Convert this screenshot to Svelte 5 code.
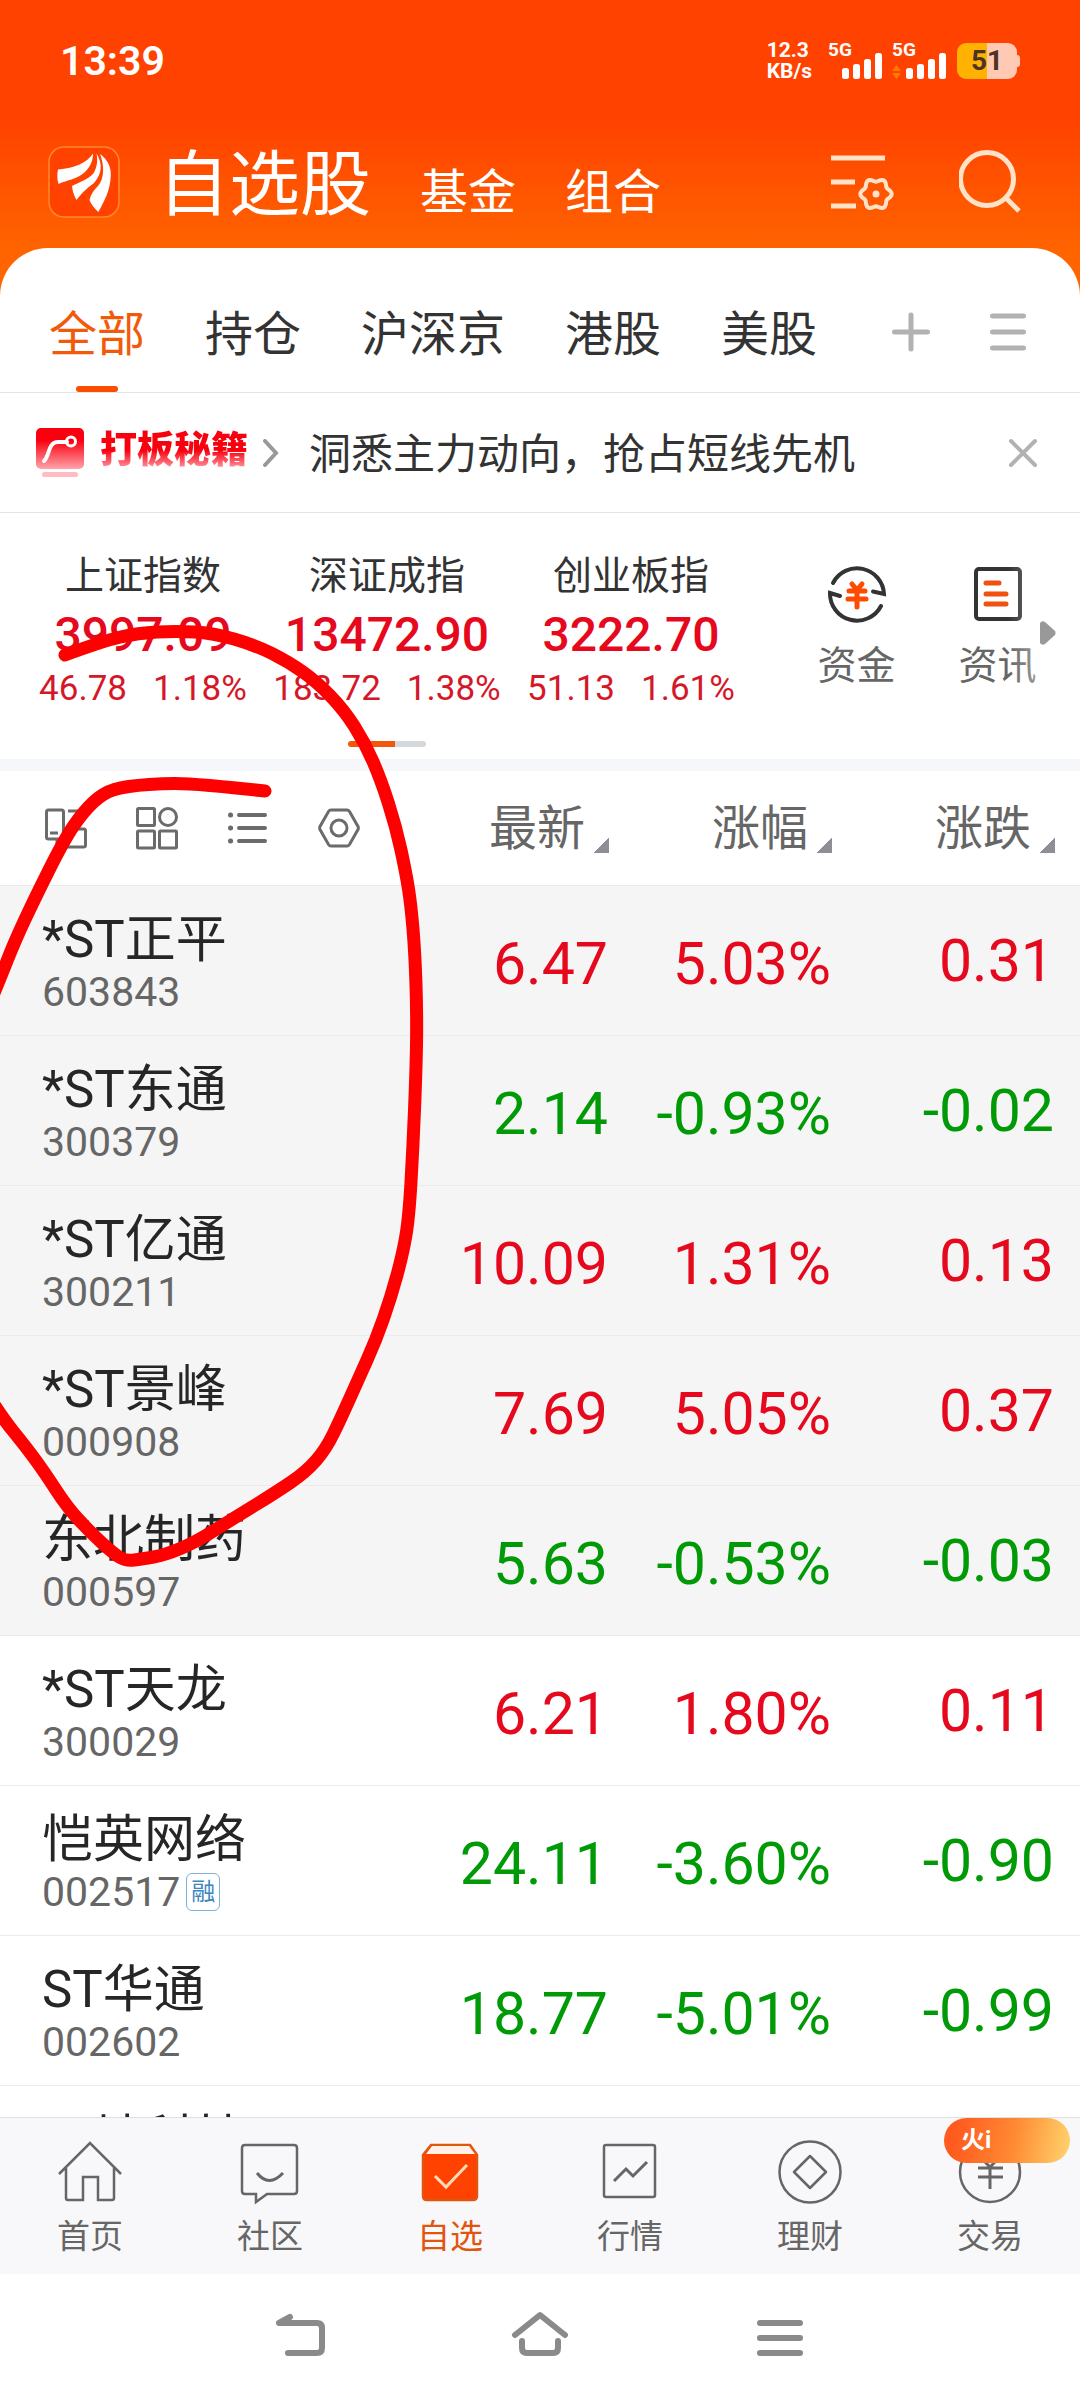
<script lang="ts">
    interface Stock {
        name: string;
        code: string;
        price: string;
        pct: string;
        diff: string;
        pinned?: boolean;
        margin?: boolean;
    }

    const groups = ['全部', '持仓', '沪深京', '港股', '美股'];
    let group = $state('全部');
    let noticeOpen = $state(true);

    const indices = [
        { name: '上证指数', value: '3997.09', diff: '46.78', pct: '1.18%' },
        { name: '深证成指', value: '13472.90', diff: '183.72', pct: '1.38%' },
        { name: '创业板指', value: '3222.70', diff: '51.13', pct: '1.61%' },
    ];

    const columns = ['最新', '涨幅', '涨跌'];

    const stocks: Stock[] = [
        { name: '*ST正平', code: '603843', price: '6.47', pct: '5.03%', diff: '0.31', pinned: true },
        { name: '*ST东通', code: '300379', price: '2.14', pct: '-0.93%', diff: '-0.02', pinned: true },
        { name: '*ST亿通', code: '300211', price: '10.09', pct: '1.31%', diff: '0.13', pinned: true },
        { name: '*ST景峰', code: '000908', price: '7.69', pct: '5.05%', diff: '0.37', pinned: true },
        { name: '东北制药', code: '000597', price: '5.63', pct: '-0.53%', diff: '-0.03', pinned: true },
        { name: '*ST天龙', code: '300029', price: '6.21', pct: '1.80%', diff: '0.11' },
        { name: '恺英网络', code: '002517', price: '24.11', pct: '-3.60%', diff: '-0.90', margin: true },
        { name: 'ST华通', code: '002602', price: '18.77', pct: '-5.01%', diff: '-0.99' },
        { name: '天地科技', code: '', price: '', pct: '', diff: '' },
    ];

    const tabs = [
        { id: 'home', label: '首页' },
        { id: 'social', label: '社区' },
        { id: 'watch', label: '自选' },
        { id: 'market', label: '行情' },
        { id: 'wealth', label: '理财' },
        { id: 'trade', label: '交易' },
    ];
    let tab = $state('watch');

    // hand-drawn marker line, leaves the screen on the left and comes back
    const pen: [number, number][] = [
        [65, 655], [103, 641], [138, 633], [176, 631], [213, 633], [255, 645], [289, 662],
        [317, 682], [344, 710], [365, 743], [381, 780], [396, 827], [406, 873], [411, 905],
        [415, 953], [417, 1017], [416, 1073], [413, 1147], [409, 1217], [403, 1253], [391, 1297],
        [376, 1340], [358, 1380], [341, 1418], [326, 1449], [306, 1472], [275, 1493], [234, 1518],
        [196, 1542], [165, 1555], [142, 1559], [126, 1561], [114, 1554], [90, 1532], [67, 1507],
        [45, 1473], [26, 1447], [0, 1415], [-40, 1350], [-60, 1200], [-30, 1050], [0, 979],
        [14, 943], [34, 900], [64, 840], [83, 812], [103, 793], [126, 786], [172, 783],
        [207, 785], [265, 791],
    ];

    function smooth(pts: [number, number][]): string {
        let d = `M${pts[0][0]} ${pts[0][1]}`;
        for (let i = 1; i < pts.length - 1; i++) {
            const [x, y] = pts[i];
            const [nx, ny] = pts[i + 1];
            d += `Q${x} ${y} ${(x + nx) / 2} ${(y + ny) / 2}`;
        }
        const last = pts[pts.length - 1];
        return d + `L${last[0]} ${last[1]}`;
    }

    // six-lobed outline
    function gear(cx: number, cy: number, r: number): string {
        const pts: string[] = [];
        for (let a = 0; a < 360; a += 6) {
            const t = (a * Math.PI) / 180;
            const rr = r + 1.7 * Math.cos(6 * t);
            pts.push(`${(cx + rr * Math.cos(t)).toFixed(1)} ${(cy + rr * Math.sin(t)).toFixed(1)}`);
        }
        return `M${pts.join('L')}Z`;
    }
</script>

{#snippet signal(arrows: boolean)}
    <div class="signal">
        <span>5G</span>
        <svg width="54" height="26" viewBox="0 0 54 26">
            {#if arrows}
                <path d="M0 18l4.5-6 4.5 6zM0 20h9l-4.5 6z" fill="#ff7a00" />
            {/if}
            <g fill="#fff">
                <rect x="14" y="15" width="7" height="11" rx="2.5" />
                <rect x="25" y="11" width="7" height="15" rx="2.5" />
                <rect x="36" y="6" width="7" height="20" rx="2.5" />
                <rect x="47" y="0" width="7" height="26" rx="2.5" />
            </g>
        </svg>
    </div>
{/snippet}

<div class="app">
    <header>
        <div class="status">
            <span class="time">13:39</span>
            <div class="speed"><span>12.3</span><span>KB/s</span></div>
            {@render signal(false)}
            {@render signal(true)}
            <div class="battery">51</div>
        </div>
        <div class="titlebar">
            <svg class="logo" width="72" height="72" viewBox="0 0 72 72">
                <rect x="1" y="1" width="70" height="70" rx="15" fill="#ff4200" stroke="#ff8a2a" stroke-width="1.5" />
                <g fill="#fff">
                    <path d="M10 23.5C27 22 39 17 45 7.5C45 14 43 20 37 26C30 33 19 34 10.5 38C9 33 9 28 10 23.5Z" />
                    <path d="M48.5 7.5C55 18 54 28 46 37C38 43 33 48 28.5 54C26 50 24.5 45 24 40C32 36 40 33 45 28C49 22 50 15 48.5 7.5Z" />
                    <path d="M52 8C60 14 63 21 62.8 29C62.5 44 56 56 50.3 66C46 62 43 58 41.5 54C43 48 46 44 50 40C57 32 56 18 52 8Z" />
                </g>
            </svg>
            <nav class="sections">
                <h1>自选股</h1>
                <a href="#fund">基金</a>
                <a href="#portfolio">组合</a>
            </nav>
            <button class="filter" aria-label="设置">
                <svg width="64" height="64" viewBox="0 0 64 64" fill="none" stroke="#ffe2c8" stroke-width="5">
                    <path d="M0 8h54M0 32h24M0 56h25" />
                    <path d={gear(45, 44, 14)} stroke-width="4" stroke-linejoin="round" />
                    <circle cx="45" cy="44" r="3.5" fill="#ffe2c8" stroke="none" />
                </svg>
            </button>
            <button aria-label="搜索">
                <svg width="64" height="64" viewBox="0 0 64 64" fill="none" stroke="#ffe2c8" stroke-width="5">
                    <circle cx="28" cy="29" r="26.5" />
                    <path d="M46 47l14 14" />
                </svg>
            </button>
        </div>
    </header>

    <main>
        <div class="groups">
            {#each groups as g}
                <button class="group" class:active={g === group} onclick={() => (group = g)}>{g}</button>
            {/each}
            <button class="add" aria-label="添加分组">
                <svg width="38" height="40" viewBox="0 0 38 40" stroke="#b2b2b2" stroke-width="5" stroke-linecap="round">
                    <path d="M2.5 20h33M19 3v34" />
                </svg>
            </button>
            <button aria-label="管理分组">
                <svg width="36" height="40" viewBox="0 0 36 40" stroke="#b2b2b2" stroke-width="5" stroke-linecap="round">
                    <path d="M2.5 4h31M2.5 20h31M2.5 36h31" />
                </svg>
            </button>
        </div>

        {#if noticeOpen}
            <div class="notice">
                <svg width="48" height="50" viewBox="0 0 48 50">
                    <defs>
                        <linearGradient id="tip" x1="0" y1="0" x2="0" y2="1">
                            <stop offset="0.3" stop-color="#f9000f" />
                            <stop offset="1" stop-color="#ffa3ab" />
                        </linearGradient>
                    </defs>
                    <rect width="48" height="41" rx="5" fill="url(#tip)" />
                    <rect x="6" y="44" width="36" height="5" rx="2.5" fill="#ffbcc2" />
                    <path d="M8 33C14 27 12 14 22 14H31" fill="none" stroke="#fff" stroke-width="4" stroke-linecap="round" />
                    <circle cx="35" cy="13.5" r="4.5" fill="none" stroke="#fff" stroke-width="3" />
                </svg>
                <strong>打板秘籍</strong>
                <svg width="16" height="28" viewBox="0 0 16 28" fill="none" stroke="#999" stroke-width="4" stroke-linecap="round">
                    <path d="M2 2l11 12L2 26" />
                </svg>
                <a href="#tips">洞悉主力动向，抢占短线先机</a>
                <button aria-label="关闭" onclick={() => (noticeOpen = false)}>
                    <svg width="30" height="30" viewBox="0 0 30 30" stroke="#b2b2b2" stroke-width="4" stroke-linecap="round">
                        <path d="M3 3l24 24M27 3L3 27" />
                    </svg>
                </button>
            </div>
        {/if}

        <section class="indices">
            <div class="cards">
                {#each indices as ix}
                    <div class="index">
                        <span class="index-name">{ix.name}</span>
                        <span class="index-value">{ix.value}</span>
                        <span class="index-change"><span>{ix.diff}</span><span>{ix.pct}</span></span>
                    </div>
                {/each}
            </div>
            <div class="links">
                <a href="#money">
                    <svg width="60" height="60" viewBox="0 0 60 60" fill="none" stroke="#333" stroke-width="4">
                        <path d="M6 19A27 27 0 0 1 57 30L46 27.5" stroke-linecap="round" />
                        <path d="M54 42A27 27 0 0 1 3 29L13 32" stroke-linecap="round" />
                        <g stroke="#ff4a00" stroke-width="5" stroke-linecap="round">
                            <path d="M25 20l5 6 5-6M22 27h16M21 35h18M30 26v17" />
                        </g>
                    </svg>
                    资金
                </a>
                <a href="#news">
                    <svg width="60" height="60" viewBox="0 0 60 60" fill="none" stroke="#333" stroke-width="4">
                        <rect x="8" y="5" width="44" height="50" rx="3" />
                        <path d="M18 19h13M18 30h20M18 40h20" stroke="#f05010" stroke-width="5" stroke-linecap="round" />
                    </svg>
                    资讯
                </a>
                <div class="more">
                    <svg width="16" height="24" viewBox="0 0 16 24" fill="#999">
                        <path d="M0 2Q2-1 5 1L15 10Q16 12 15 14L5 23Q2 25 0 22Z" />
                    </svg>
                </div>
            </div>
            <div class="pager"></div>
        </section>

        <div class="list">
            <table>
                <thead>
                    <tr>
                        <th>
                            <div class="tools">
                                <button aria-label="分栏">
                                    <svg width="42" height="44" viewBox="0 0 42 44">
                                        <rect x="1.5" y="4" width="17" height="29" rx="2" />
                                        <path d="M5 27h8M23 5h15v8M24 23h15q1.5 0 1.5 2v14q0 2-2 2H14q-2 0-2-2v-6" />
                                    </svg>
                                </button>
                                <button aria-label="宫格">
                                    <svg width="42" height="44" viewBox="0 0 42 44">
                                        <rect x="1.5" y="2.5" width="17" height="17" rx="1" />
                                        <circle cx="32" cy="11" r="8.5" />
                                        <rect x="1.5" y="25" width="17" height="17" rx="1" />
                                        <rect x="23.5" y="25" width="17" height="17" rx="1" />
                                    </svg>
                                </button>
                                <button aria-label="列表">
                                    <svg width="42" height="44" viewBox="0 0 42 44" stroke-linecap="round">
                                        <path d="M3.5 9h.1M3.5 22h.1M3.5 35h.1" stroke-width="5" />
                                        <path d="M12 9h26M12 22h26M12 35h26" stroke-width="4" />
                                    </svg>
                                </button>
                                <button aria-label="设置">
                                    <svg width="42" height="44" viewBox="0 0 42 44">
                                        <path d="M13 4h16q1.5 0 2.5 1.5l8.5 15q.7 1.5 0 3l-8.5 15q-1 1.5-2.5 1.5H13q-1.5 0-2.5-1.5L2 23.5q-.7-1.5 0-3l8.5-15Q11.5 4 13 4z" />
                                        <circle cx="21" cy="22" r="8" />
                                    </svg>
                                </button>
                            </div>
                        </th>
                        {#each columns as c}
                            <th class="col"><button class="sort">{c}</button></th>
                        {/each}
                    </tr>
                </thead>
                <tbody>
                    {#each stocks as s}
                        <tr class:pinned={s.pinned} class:down={s.pct.startsWith('-')}>
                            <td>
                                <div class="name">{s.name}</div>
                                <div class="code">
                                    {s.code}
                                    {#if s.margin}<span class="margin">融</span>{/if}
                                </div>
                            </td>
                            <td class="num">{s.price}</td>
                            <td class="num">{s.pct}</td>
                            <td class="num">{s.diff}</td>
                        </tr>
                    {/each}
                </tbody>
            </table>
        </div>
    </main>

    <nav class="tabbar">
        {#each tabs as t}
            <button class:active={t.id === tab} onclick={() => (tab = t.id)}>
                <svg width="66" height="66" viewBox="0 0 66 66" fill="none" stroke="currentColor" stroke-width="2.5">
                    {#if t.id === 'home'}
                        <path d="M2 35L33 4L64 35M9 29V59q0 2 2 2H26V38H41V61H55q2 0 2-2V29" />
                    {:else if t.id === 'social'}
                        <path d="M8 6H57q3 0 3 3V52q0 3-3 3H30L19 63V55H8q-3 0-3-3V9q0-3 3-3z" />
                        <path d="M20 34Q32 49 46 34" stroke-width="3" />
                    {:else if t.id === 'watch'}
                        <path d="M6 16L14 6H53L60 16V57q0 4-4 4H10q-4 0-4-4Z" fill="#ff4200" />
                        <path d="M9 15L15 7H52L58 15Z" fill="#fff1e6" stroke="none" />
                        <path d="M18 37L29 48L50 26" stroke="#ffdcb8" stroke-width="3" />
                    {:else if t.id === 'market'}
                        <rect x="7" y="6" width="51" height="52" rx="2" />
                        <path d="M17 42L29 30L36 37L50 23" stroke-width="3" />
                    {:else if t.id === 'wealth'}
                        <circle cx="33" cy="33" r="30.5" />
                        <path d="M33 17L49 33L33 49L17 33Z" stroke-linejoin="round" />
                    {:else}
                        <circle cx="33" cy="33" r="30" />
                        <path d="M23 18L33 28L43 18M21 29H46M21 38H46M33 28V50" stroke-width="3" />
                    {/if}
                </svg>
                {t.label}
                {#if t.id === 'trade'}<span class="badge">火i</span>{/if}
            </button>
        {/each}
    </nav>

    <nav class="system">
        <button aria-label="返回">
            <svg width="60" height="48" viewBox="0 0 60 48"><path d="M20 6L9 12H47q5 0 5 5V37q0 5-5 5H18" /></svg>
        </button>
        <button aria-label="主屏幕">
            <svg width="60" height="48" viewBox="0 0 60 48"><path d="M5 24L30 4L55 24M12 30V37q0 5 5 5H43q5 0 5-5V30" /></svg>
        </button>
        <button aria-label="最近任务">
            <svg width="60" height="48" viewBox="0 0 60 48"><path d="M10 12H50M10 27H50M10 42H50" /></svg>
        </button>
    </nav>

    <svg class="pen" viewBox="0 0 1080 2400" aria-hidden="true">
        <path d={smooth(pen)} />
    </svg>
</div>

<style>
    :global(body) {
        background: #fff;
    }
    .app {
        position: relative;
        display: flex;
        flex-direction: column;
        height: 100vh;
        overflow: hidden;
        font-family: Roboto, 'Noto Sans CJK SC', sans-serif;
        color: #333;
        background: #fff;
    }
    svg {
        display: block;
        flex: none;
    }
    button {
        padding: 0;
        border: 0;
        background: none;
        font: inherit;
        color: inherit;
        cursor: pointer;
    }
    a {
        color: inherit;
        text-decoration: none;
    }

    header {
        padding-bottom: 60px;
        margin-bottom: -60px;
        background: linear-gradient(#ff4200 120px, #ff6400 250px);
        color: #fff;
    }
    .status {
        display: flex;
        align-items: center;
        height: 122px;
        padding: 0 60px;
    }
    .time {
        flex: 1;
        font-size: 41px;
        font-weight: 600;
    }
    .speed {
        display: flex;
        flex-direction: column;
        margin-right: 16px;
        font-size: 21px;
        font-weight: 700;
        line-height: 21px;
    }
    .signal {
        display: flex;
        flex-direction: column;
        align-items: flex-end;
        margin-right: 10px;
    }
    .signal span {
        align-self: flex-start;
        height: 10px;
        font-size: 19px;
        font-weight: 700;
        line-height: 14px;
    }
    .battery {
        position: relative;
        width: 60px;
        margin: 0 3px 0 1px;
        border-radius: 9px;
        background: linear-gradient(90deg, #ffb300 50%, #ffc9b3 50%);
        color: #4d3226;
        font-size: 28px;
        font-weight: 700;
        line-height: 36px;
        text-align: center;
    }
    .battery::after {
        content: '';
        position: absolute;
        right: -3px;
        top: 12px;
        width: 3px;
        height: 12px;
        border-radius: 0 3px 3px 0;
        background: #ffc9b3;
    }
    .titlebar {
        display: flex;
        align-items: center;
        height: 126px;
        padding: 0 57px 6px 48px;
        box-sizing: border-box;
    }
    .sections {
        display: flex;
        flex: 1;
        align-items: baseline;
        gap: 49px;
        margin-left: 38px;
        padding-top: 14px;
        font-size: 48px;
        line-height: 80px;
    }
    h1 {
        margin: 0;
        font-size: 71px;
        font-weight: 400;
    }
    .filter {
        margin-right: 64px;
    }

    main {
        display: flex;
        flex: 1;
        flex-direction: column;
        min-height: 0;
        border-radius: 48px 48px 0 0;
        background: #fff;
    }
    .groups {
        display: flex;
        flex: none;
        align-items: center;
        gap: 60px;
        height: 144px;
        padding: 0 54px 0 49px;
        border-bottom: 1px solid #e3e3e3;
    }
    .group {
        position: relative;
        padding-top: 30px;
        font-size: 48px;
        line-height: 114px;
    }
    .group.active {
        color: #f25a0a;
    }
    .group.active::after {
        content: '';
        position: absolute;
        left: 50%;
        bottom: 0;
        width: 42px;
        height: 6px;
        margin-left: -21px;
        border-radius: 3px;
        background: #fb4d00;
    }
    .groups svg {
        margin-top: 24px;
    }
    .add {
        margin-left: auto;
    }
    .notice {
        display: flex;
        flex: none;
        align-items: center;
        height: 119px;
        padding: 0 42px 0 36px;
        border-bottom: 1px solid #e3e3e3;
    }
    .notice strong {
        margin: 0 15px 0 16px;
        background: linear-gradient(#f9000f 45%, #ff9aa4 80%);
        background-clip: text;
        color: transparent;
        font-size: 37px;
        font-weight: 900;
        line-height: 48px;
        padding-bottom: 4px;
    }
    .notice a {
        flex: 1;
        margin-left: 30px;
        padding-bottom: 5px;
        font-size: 42px;
    }

    .indices {
        position: relative;
        display: flex;
        flex: none;
        height: 246px;
        border-bottom: 12px solid #f6f7fa;
    }
    .cards {
        display: flex;
        flex: 732;
        padding: 34px 0 0 21px;
    }
    .index {
        display: flex;
        flex: 1 0 0;
        flex-direction: column;
        align-items: center;
    }
    .index-name {
        font-size: 39px;
        line-height: 58px;
    }
    .index-value {
        color: #e6081c;
        font-size: 48px;
        font-weight: 500;
        line-height: 59px;
    }
    .index-change {
        display: flex;
        gap: 26px;
        color: #d4182a;
        font-size: 35px;
        line-height: 50px;
    }
    .links {
        position: relative;
        display: flex;
        flex: 282;
        padding: 51px 12px 0 33px;
    }
    .links a {
        display: flex;
        flex: 1;
        flex-direction: column;
        align-items: center;
        gap: 13px;
        color: #666;
        font-size: 39px;
        line-height: 58px;
    }
    .more {
        position: absolute;
        top: 40px;
        right: 0;
        bottom: 0;
        display: flex;
        justify-content: flex-end;
        width: 72px;
        padding: 68px 24px 0 0;
        box-sizing: border-box;
        background: linear-gradient(90deg, #fff0, #ffffff80 60%);
    }
    .pager {
        position: absolute;
        bottom: 12px;
        left: 50%;
        width: 78px;
        height: 6px;
        margin-left: -192px;
        border-radius: 3px;
        background: linear-gradient(90deg, #f2560a 60%, #d5d9dc 60%);
    }

    .list {
        flex: 1;
        min-height: 0;
        overflow: hidden;
    }
    table {
        width: 100%;
        border-collapse: collapse;
        table-layout: fixed;
    }
    th,
    td {
        box-sizing: border-box;
        padding: 0;
        border-bottom: 1px solid #ebebeb;
        text-align: left;
    }
    th {
        height: 114px;
        font-weight: 400;
    }
    .col {
        width: 223px;
        padding-right: 25px;
        text-align: right;
    }
    .tools {
        display: flex;
        gap: 49px;
        padding: 1px 0 0 45px;
    }
    .tools svg {
        fill: none;
        stroke: #6b6b6b;
        stroke-width: 3;
    }
    .sort {
        padding-top: 3px;
        color: #666;
        font-size: 48px;
        line-height: 58px;
    }
    .sort::after {
        content: '';
        display: inline-block;
        width: 15px;
        height: 15px;
        margin: 0 0 -8px 9px;
        background: linear-gradient(135deg, transparent 50%, #8f8e94 50%);
    }
    td {
        height: 150px;
    }
    td:first-child {
        padding: 8px 0 0 42px;
    }
    .pinned {
        background: #f5f5f5;
    }
    .name {
        color: #262626;
        font-size: 51px;
        line-height: 56px;
    }
    .code {
        display: flex;
        align-items: center;
        gap: 6px;
        height: 48px;
        color: #666;
        font-size: 41px;
        line-height: 48px;
    }
    .margin {
        padding: 0 4px;
        border: 1px solid #7fb0d8;
        border-radius: 6px;
        color: #3d85c0;
        font-size: 24px;
        line-height: 36px;
    }
    .num {
        padding: 8px 26px 0 0;
        color: #e6081c;
        font-size: 59px;
        line-height: 72px;
        text-align: right;
    }
    .num:last-child {
        padding-top: 2px;
    }
    .down .num {
        color: #009a06;
    }

    .tabbar {
        display: flex;
        flex: none;
        height: 156px;
        border-top: 1px solid #e0e0e2;
        background: #f8f8fa;
        color: #666;
    }
    .tabbar button {
        position: relative;
        display: flex;
        flex: 1;
        flex-direction: column;
        align-items: center;
        gap: 9px;
        padding-top: 21px;
        font-size: 33px;
        line-height: 46px;
    }
    .tabbar .active {
        color: #e0560f;
    }
    .badge {
        position: absolute;
        top: 0;
        right: 10px;
        width: 126px;
        padding-left: 17px;
        box-sizing: border-box;
        border-radius: 23px;
        background: linear-gradient(100deg, #ff5a1f 10%, #ff8a33 55%, #ffd56e);
        color: #fff;
        font-size: 24px;
        font-weight: 700;
        line-height: 45px;
        text-align: left;
    }
    .system {
        display: flex;
        flex: none;
        justify-content: center;
        gap: 180px;
        height: 126px;
        padding-bottom: 4px;
        box-sizing: border-box;
        background: #fff;
    }
    .system svg {
        fill: none;
        stroke: #8a8a8a;
        stroke-width: 6;
        stroke-linecap: round;
        stroke-linejoin: round;
    }
    .pen {
        position: absolute;
        top: 0;
        left: 0;
        width: 100%;
        pointer-events: none;
    }
    .pen path {
        fill: none;
        stroke: #f00;
        stroke-width: 13;
        stroke-linecap: round;
    }
</style>
